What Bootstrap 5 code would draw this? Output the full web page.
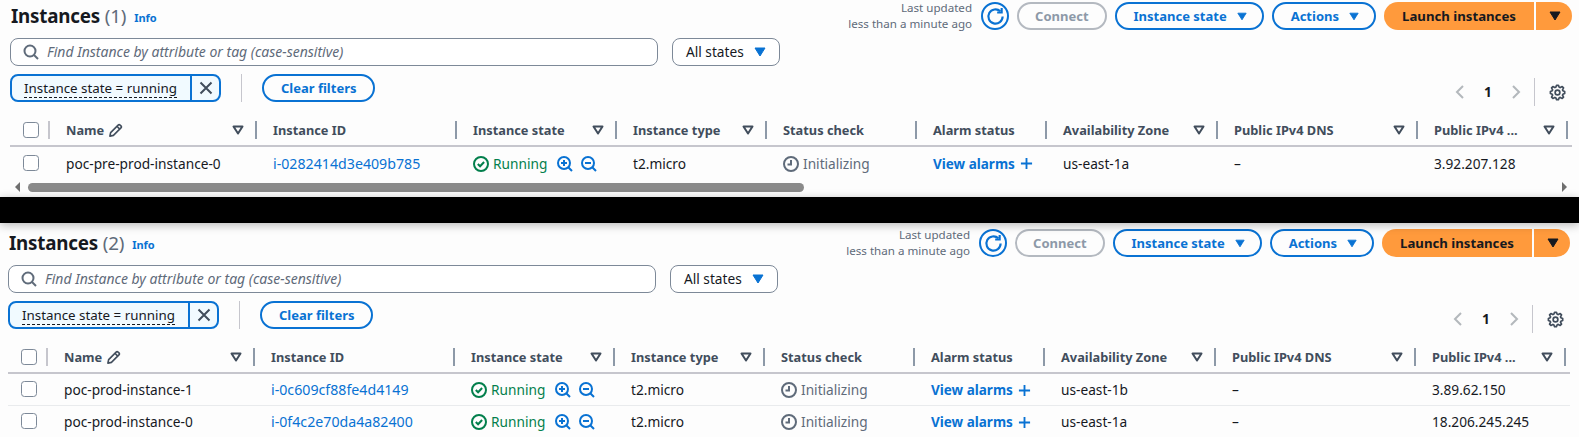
<!DOCTYPE html>
<html lang="en">
<head>
  <meta charset="UTF-8" />
  <meta name="viewport" content="width=device-width, initial-scale=1.0" />
  <title>Instances</title>
  <link href="https://cdn.jsdelivr.net/npm/bootstrap@5.3.0/dist/css/bootstrap.min.css" rel="stylesheet" />
  <style>
    :root {
      --aws-blue: #0972d3;
      --aws-text: #16191f;
      --aws-grey: #5f6b7a;
      --aws-head: #414d5c;
    }
    html, body { height: 437px; overflow: hidden; }
    body {
      background: #fdfdfd;
      color: var(--aws-text);
      font-family: "Noto Sans", "Open Sans", sans-serif;
      font-size: 13.7px;
      line-height: 20px;
    }
    .panel-one { padding: 2px 7px 0 10px; height: 197px; overflow: hidden; }
    .panel-two { padding: 6px 9px 0 8px; height: 214px; overflow: hidden; }
    .black-band { height: 26px; background: #000; position: relative; z-index: 2; box-shadow: 0 2px 10px rgba(0, 0, 0, .28); }
    .tool-row { height: 28px; }
    .page-title { font-size: 18.8px; font-weight: 700; line-height: 28px; margin: 0 0 0 1px; letter-spacing: -.2px; }
    .page-title span { font-weight: 400; color: var(--aws-grey); }
    .info-link { font-size: 11px; font-weight: 700; color: var(--aws-blue); text-decoration: none; margin-left: 8px; position: relative; top: 2px; }
    .updated-text { font-size: 11.6px; line-height: 16px; color: var(--aws-grey); text-align: right; margin-right: 9px; }
    .pill-btn {
      height: 28px; padding: 0 15px 0 17px; border: 2px solid var(--aws-blue); border-radius: 14px;
      background: transparent; color: var(--aws-blue); font-size: 13px; font-weight: 700; line-height: 20px;
      display: inline-flex; align-items: center; gap: 10px; white-space: nowrap;
    }
    .pill-btn.off { border-color: #b4b9c0; color: #8d99a8; padding: 0 16px; }
    .pill-btn.flat { padding: 0 17px; }
    .pill-btn.ref { width: 28px; padding: 0; justify-content: center; border-radius: 50%; }
    .launch-main, .launch-drop { height: 28px; background: #ff9a3c; border: 0; color: var(--aws-text); font-size: 13.2px; font-weight: 700; display: inline-flex; align-items: center; justify-content: center; }
    .launch-main { width: 150px; border-radius: 14px 0 0 14px; }
    .launch-drop { width: 36px; margin-left: 2px; border-radius: 0 14px 14px 0; padding-right: 4px; }
    .search-box { height: 28px; width: 648px; border: 1px solid #7d8998; border-radius: 8px; background: #fff; padding-left: 12px; gap: 8px; }
    .search-box input { border: 0; outline: 0; background: transparent; width: 100%; font-size: 14px; font-style: italic; padding: 0; color: var(--aws-text); }
    .search-box input::placeholder { color: var(--aws-grey); opacity: 1; }
    .state-pick { height: 28px; width: 108px; margin-left: 14px; border: 1px solid #7d8998; border-radius: 8px; background: #fff; padding: 0 13px; justify-content: space-between; }
    .token-box { height: 28px; width: 211px; border: 2px solid var(--aws-blue); border-radius: 8px; background: #f1faff; }
    .token-label { width: 178px; padding-left: 12px; flex: none; font-size: 13.35px; }
    .token-label span { border-bottom: 1px dashed var(--aws-text); line-height: 17px; display: inline-block; white-space: nowrap; }
    .token-x { flex: 1; border-left: 2px solid var(--aws-blue); height: 100%; color: var(--aws-head); }
    .v-rule { width: 1px; height: 28px; background: #c6c6cd; margin: 0 20px; }
    .pager-box { height: 28px; margin-top: 4px; padding-right: 6px; }
    .pager-num { font-weight: 700; width: 46px; text-align: center; }
    .pager-rule { width: 1px; height: 28px; background: #c6c6cd; margin: 0 14px 0 13px; }
    .gear-tone { color: var(--aws-head); }
    .grid-wrap { margin-top: 15px; }
    table.inst-table { table-layout: fixed; width: 1562px; margin: 0; background: transparent; }
    .inst-table th { padding: 0 0 6px; border-bottom: 2px solid #c6c6cd; font-weight: 700; color: var(--aws-head); font-size: 12.8px; background: transparent; }
    .inst-table td { padding: 2px 0 0 16px; height: 32px; border-bottom: 1px solid #e9ebed; vertical-align: middle; background: transparent; color: var(--aws-text); white-space: nowrap; }
    .inst-table tr:last-child td { border-bottom: 0; }
    .inst-table td:first-child { padding: 0 0 0 13px; }
    .th-inner { height: 18px; padding: 0 11px 0 16px; border-right: 2px solid #8d99a8; white-space: nowrap; }
    th:first-child .th-inner { padding: 0 0 0 13px; border-right-color: #c6c6cd; }
    th:last-child .th-inner { margin-right: 4px; }
    .tick-box { width: 16px; height: 16px; margin: 0; border: 1.5px solid #7d8998; border-radius: 4px; display: block; }
    .id-link { color: var(--aws-blue); text-decoration: none; }
    .inst-table td a.id-link { font-size: 14.2px; }
    .zoom-pair { margin-left: 10px; }
    .run-text { color: #037f4c; }
    .init-text { color: var(--aws-grey); }
    .alarm-link { color: var(--aws-blue); font-weight: 700; font-size: 13.5px; text-decoration: none; gap: 5px; }
    .scroll-row { height: 18px; padding: 4px 5px 0 5px; }
    .scroll-thumb { width: 776px; height: 9px; border-radius: 5px; background: #8a8a8a; margin-left: 8px; }
    .arrow-l { width: 0; height: 0; border: 5px solid transparent; border-left: 0; border-right-color: #6f6f6f; }
    .arrow-r { width: 0; height: 0; border: 5px solid transparent; border-right: 0; border-left-color: #6f6f6f; }
    svg { display: block; flex: none; }
  </style>
</head>
<body>
  <svg width="0" height="0" class="d-none">
    <symbol id="ico-search" viewBox="0 0 16 16"><circle cx="7" cy="7" r="5.5" fill="none" stroke="currentColor" stroke-width="2"/><path d="M11 11l4 4" fill="none" stroke="currentColor" stroke-width="2"/></symbol>
    <symbol id="ico-caret" viewBox="0 0 12 10"><path d="M1 1h10L6 9z" fill="currentColor" stroke="currentColor" stroke-width="1" stroke-linejoin="round"/></symbol>
    <symbol id="ico-sort" viewBox="0 0 12 10"><path d="M1.5 1.500h9L6 8.500z" fill="none" stroke="currentColor" stroke-width="2" stroke-linejoin="round"/></symbol>
    <symbol id="ico-refresh" viewBox="0 0 16 16"><path d="M14 8a6 6 0 1 1-1.900-4.400" fill="none" stroke="currentColor" stroke-width="1.800"/><path d="M13.200 .8v3.800H9.400" fill="none" stroke="currentColor" stroke-width="1.800"/></symbol>
    <symbol id="ico-x" viewBox="0 0 16 16"><path d="M2.500 2.500l11 11M13.500 2.500l-11 11" fill="none" stroke="currentColor" stroke-width="2"/></symbol>
    <symbol id="ico-left" viewBox="0 0 10 16"><path d="M8 2L2 8l6 6" fill="none" stroke="currentColor" stroke-width="2"/></symbol>
    <symbol id="ico-right" viewBox="0 0 10 16"><path d="M2 2l6 6-6 6" fill="none" stroke="currentColor" stroke-width="2"/></symbol>
    <symbol id="ico-gear" viewBox="-1 -1 18 18"><path d="M13.300 5.200l1.100-2.100L13 1.700l-2.100 1.100c-.3-.2-.7-.3-1.100-.4L9 .5H7l-.8 1.900c-.3.1-.7.2-1 .4L3.100 1.700 1.700 3.100l1.100 2.100c-.2.3-.3.7-.4 1L.5 7v2l1.900.8c.1.4.3.7.4 1.100L1.700 13 3.100 14.300l2.100-1.100c.3.2.7.3 1 .4l.8 1.900h2l.8-1.900c.4-.1.7-.3 1.100-.4l2.100 1.100 1.400-1.300-1.100-2.100c.2-.4.3-.7.4-1.100l1.900-.8V7l-1.900-.8c-.1-.3-.2-.7-.4-1z" fill="none" stroke="currentColor" stroke-width="1.800" stroke-linejoin="round"/><circle cx="8" cy="8" r="2.500" fill="none" stroke="currentColor" stroke-width="1.800"/></symbol>
    <symbol id="ico-pencil" viewBox="0 0 16 16"><path d="M2 14l.8-3.800L10.800 2.200a1.500 1.500 0 0 1 2.100 0l.9.9a1.500 1.500 0 0 1 0 2.100L5.800 13.200zM9.500 3.500l3 3" fill="none" stroke="currentColor" stroke-width="1.700" stroke-linejoin="round"/></symbol>
    <symbol id="ico-ok" viewBox="0 0 16 16"><circle cx="8" cy="8" r="7" fill="none" stroke="currentColor" stroke-width="2"/><path d="M4.800 8l2.300 2.300 4-4.300" fill="none" stroke="currentColor" stroke-width="2"/></symbol>
    <symbol id="ico-in" viewBox="0 0 16 16"><circle cx="7" cy="7" r="6" fill="none" stroke="currentColor" stroke-width="2"/><path d="M11.500 11.500L15 15M4 7h6M7 4v6" fill="none" stroke="currentColor" stroke-width="2"/></symbol>
    <symbol id="ico-out" viewBox="0 0 16 16"><circle cx="7" cy="7" r="6" fill="none" stroke="currentColor" stroke-width="2"/><path d="M11.500 11.500L15 15M4 7h6" fill="none" stroke="currentColor" stroke-width="2"/></symbol>
    <symbol id="ico-clock" viewBox="0 0 16 16"><circle cx="8" cy="8" r="7" fill="none" stroke="currentColor" stroke-width="2"/><path d="M8 4v4.500H4.500" fill="none" stroke="currentColor" stroke-width="2"/></symbol>
    <symbol id="ico-plus" viewBox="0 0 14 14"><path d="M7 1v12M1 7h12" fill="none" stroke="currentColor" stroke-width="2"/></symbol>
  </svg>

  <div id="panelOne" class="panel-one"></div>
  <div class="black-band"></div>
  <div id="panelTwo" class="panel-two"></div>

  <script>
    const ico = (id, w, h, cls = '') => `<svg width="${w}" height="${h}" class="${cls}"><use href="#${id}"/></svg>`;

    const columns = [
      ['Name', 207], ['Instance ID', 200], ['Instance state', 160], ['Instance type', 150],
      ['Status check', 150], ['Alarm status', 130], ['Availability Zone', 171],
      ['Public IPv4 DNS', 200], ['Public IPv4 ...', 154]
    ];
    const noSort = ['Instance ID', 'Status check', 'Alarm status'];

    function headCell(name) {
      const pencil = name === 'Name' ? ico('ico-pencil', 15, 15, 'ms-1') : '';
      const sort = noSort.includes(name) ? '' : ico('ico-sort', 12, 10);
      return `<div class="th-inner d-flex align-items-center justify-content-between">
        <span class="d-flex align-items-center">${name}${pencil}</span>${sort}</div>`;
    }

    function rowHtml(r) {
      return `<tr>
        <td><input class="form-check-input tick-box" type="checkbox" aria-label="Select row"></td>
        <td>${r.name}</td>
        <td><a class="id-link" href="#">${r.id}</a></td>
        <td><div class="d-flex align-items-center"><span class="run-text d-flex align-items-center gap-1">${ico('ico-ok', 16, 16)}Running</span>
          <span class="id-link zoom-pair d-flex gap-2">${ico('ico-in', 16, 16)}${ico('ico-out', 16, 16)}</span></div></td>
        <td>t2.micro</td>
        <td><span class="init-text d-flex align-items-center gap-1">${ico('ico-clock', 16, 16)}Initializing</span></td>
        <td><a class="alarm-link d-flex align-items-center" href="#">View alarms${ico('ico-plus', 13, 13)}</a></td>
        <td>${r.zone}</td>
        <td>–</td>
        <td>${r.ip}</td>
      </tr>`;
    }

    function panelHtml(count, rows, withScroll) {
      return `
      <div class="tool-row d-flex align-items-center justify-content-between">
        <div class="d-flex align-items-center">
          <h1 class="page-title">Instances <span>(${count})</span></h1>
          <a class="info-link" href="#">Info</a>
        </div>
        <div class="d-flex align-items-center">
          <div class="updated-text">Last updated<br>less than a minute ago</div>
          <button class="pill-btn ref">${ico('ico-refresh', 19, 19)}</button>
          <button class="pill-btn off ms-2">Connect</button>
          <button class="pill-btn ms-2">Instance state${ico('ico-caret', 10, 9)}</button>
          <button class="pill-btn ms-2">Actions${ico('ico-caret', 10, 9)}</button>
          <button class="launch-main ms-2">Launch instances</button>
          <button class="launch-drop">${ico('ico-caret', 12, 10)}</button>
        </div>
      </div>
      <div class="d-flex mt-2">
        <div class="search-box d-flex align-items-center">
          <span class="init-text">${ico('ico-search', 16, 16)}</span>
          <input type="text" placeholder="Find Instance by attribute or tag (case-sensitive)">
        </div>
        <div class="state-pick d-flex align-items-center">All states<span class="id-link">${ico('ico-caret', 12, 10)}</span></div>
      </div>
      <div class="d-flex mt-2 justify-content-between">
        <div class="d-flex">
          <div class="token-box d-flex align-items-center">
            <div class="token-label"><span>Instance state = running</span></div>
            <div class="token-x d-flex align-items-center justify-content-center">${ico('ico-x', 16, 16)}</div>
          </div>
          <div class="v-rule"></div>
          <button class="pill-btn flat">Clear filters</button>
        </div>
        <div class="pager-box d-flex align-items-center">
          <span class="text-secondary opacity-50">${ico('ico-left', 10, 16)}</span>
          <span class="pager-num">1</span>
          <span class="text-secondary opacity-50">${ico('ico-right', 10, 16)}</span>
          <span class="pager-rule"></span>
          <span class="gear-tone">${ico('ico-gear', 17, 17)}</span>
        </div>
      </div>
      <div class="grid-wrap">
        <table class="table inst-table">
          <colgroup><col style="width:40px">${columns.map(c => `<col style="width:${c[1]}px">`).join('')}</colgroup>
          <thead><tr>
            <th><div class="th-inner d-flex align-items-center"><input class="form-check-input tick-box" type="checkbox" aria-label="Select all"></div></th>
            ${columns.map(c => `<th>${headCell(c[0])}</th>`).join('')}
          </tr></thead>
          <tbody>${rows.map(rowHtml).join('')}</tbody>
        </table>
      </div>
      ${withScroll ? `<div class="scroll-row d-flex align-items-start justify-content-between">
        <div class="d-flex align-items-center"><div class="arrow-l"></div><div class="scroll-thumb"></div></div>
        <div class="arrow-r"></div></div>` : ''}`;
    }

    document.getElementById('panelOne').innerHTML = panelHtml(1, [
      { name: 'poc-pre-prod-instance-0', id: 'i-0282414d3e409b785', zone: 'us-east-1a', ip: '3.92.207.128' }
    ], true);
    document.getElementById('panelTwo').innerHTML = panelHtml(2, [
      { name: 'poc-prod-instance-1', id: 'i-0c609cf88fe4d4149', zone: 'us-east-1b', ip: '3.89.62.150' },
      { name: 'poc-prod-instance-0', id: 'i-0f4c2e70da4a82400', zone: 'us-east-1a', ip: '18.206.245.245' }
    ], false);
  </script>
  <script src="https://cdn.jsdelivr.net/npm/bootstrap@5.3.0/dist/js/bootstrap.bundle.min.js"></script>
</body>
</html>
